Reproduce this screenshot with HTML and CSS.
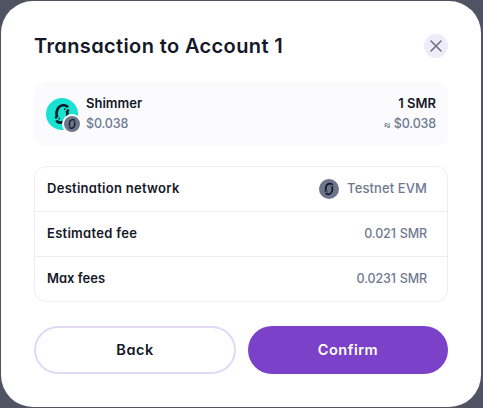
FILE: index.html
```html
<!DOCTYPE html>
<html lang="en">
<head>
<meta charset="utf-8">
<title>Transaction to Account 1</title>
<link rel="stylesheet" href="styles.css">
</head>
<body>
<svg class="defs" aria-hidden="true">
  <symbol id="shimmer" viewBox="0 0 32 32">
    <g fill="none" stroke="currentColor" stroke-width="2.7">
      <path d="M21.8 9.4C20.2 6.4 14.6 6.5 12.2 10C10.6 12.8 10 16.4 11.3 19.2"/>
      <path d="M10.4 22.4C11.8 25.4 17.4 25.3 19.8 21.8C21.4 19 22 15.4 20.7 12.6"/>
    </g>
    <circle cx="22" cy="12.4" r="1.2" fill="currentColor"/>
    <circle cx="10" cy="19.4" r="1.2" fill="currentColor"/>
    <circle cx="18.8" cy="11.2" r=".9" fill="currentColor"/>
    <circle cx="13.2" cy="20.6" r=".9" fill="currentColor"/>
  </symbol>
</svg>
<main class="modal">
  <header class="header">
    <h1 class="title">Transaction to Account 1</h1>
    <button class="close" aria-label="Close">
      <svg viewBox="0 0 24 24" width="24" height="24"><path d="M7 7L17 17M17 7L7 17"/></svg>
    </button>
  </header>
  <section class="asset">
    <div class="token">
      <svg class="token-icon"><use href="#shimmer"/></svg>
      <svg class="token-badge"><use href="#shimmer"/></svg>
    </div>
    <div class="asset-text">
      <div class="strong">Shimmer</div>
      <div class="muted price">$0.038</div>
    </div>
    <div class="asset-text amount">
      <div class="strong">1 SMR</div>
      <div class="muted price"><span class="approx">≈</span> $0.038</div>
    </div>
  </section>
  <section class="details">
    <div class="row"><span class="strong label">Destination network</span><span class="muted value"><svg class="network"><use href="#shimmer"/></svg><span class="evm">Testnet EVM</span></span></div>
    <div class="row"><span class="strong label">Estimated fee</span><span class="muted fee">0.021 SMR</span></div>
    <div class="row"><span class="strong">Max fees</span><span class="muted fee">0.0231 SMR</span></div>
  </section>
  <footer class="actions">
    <button class="button back">Back</button>
    <button class="button confirm">Confirm</button>
  </footer>
</main>
</body>
</html>
```
FILE: styles.css
```css
* { box-sizing: border-box; }
body {
  margin: 0;
  height: 408px;
  padding: 1px 2px 1px 1px;
  overflow: hidden;
  background: #505362;
  color: #141827;
  font-family: Inter, "Liberation Sans", sans-serif;
  font-feature-settings: "cv11", "ss03";
}
.defs { display: none; }
.modal {
  height: 406px;
  padding: 33px;
  border-radius: 32px;
  background: #fff;
}
.header { display: flex; align-items: center; justify-content: space-between; height: 24px; margin-bottom: 24px; }
.title { margin: 0; font-size: 20px; line-height: 24px; font-weight: 600; letter-spacing: 0.38px; white-space: nowrap; }
.close { width: 24px; height: 24px; padding: 0; border: 0; border-radius: 50%; background: #f0ebf8; }
.close svg { display: block; fill: none; stroke: #6b7186; stroke-width: 1.6; stroke-linecap: round; }
.asset {
  display: flex;
  align-items: center;
  height: 64px;
  margin-bottom: 20px;
  padding: 0 12px;
  border-radius: 12px;
  background: #fbfbfe;
}
.token { position: relative; width: 32px; height: 32px; margin-right: 8px; }
.token-icon { display: block; width: 32px; height: 32px; border-radius: 50%; background: #19e2d3; color: #061c28; }
.token-badge {
  position: absolute;
  left: 16px;
  top: 16px;
  width: 20px;
  height: 20px;
  border: 2px solid #fff;
  border-radius: 50%;
  background: #6d758b;
  color: #111827;
}
.asset-text { padding-bottom: 1px; font-size: 13px; line-height: 20px; white-space: nowrap; }
.asset-text .strong { line-height: 20px; }
.amount { margin-left: auto; text-align: right; }
.strong { font-weight: 600; }
.label { letter-spacing: 0.28px; }
.muted { color: #707991; font-weight: 500; }
.price { font-size: 12.5px; letter-spacing: -0.15px; line-height: 21px; }
.approx { font-size: 11px; }
.details { margin-bottom: 24px; height: 136px; border: 1px solid #efecf8; border-radius: 12px; }
.row {
  display: flex;
  align-items: center;
  justify-content: space-between;
  height: 45px;
  padding: 0 20px 2px 12px;
  border-bottom: 1px solid #efecf8;
  font-size: 13px;
}
.row:last-child { border-bottom: 0; height: 44px; }
.value { display: flex; align-items: center; gap: 8px; }
.evm { letter-spacing: 0.1px; }
.fee { font-size: 12.5px; letter-spacing: -0.15px; word-spacing: 1px; }
.network { position: relative; top: 1px; width: 20px; height: 20px; border-radius: 50%; background: #6d758b; color: #111827; }
.actions { display: grid; grid-template-columns: 202px 200px; gap: 12px; }
.button { height: 48px; padding: 0 0 2px; border: 0; border-radius: 24px; font: inherit; font-size: 14.5px; font-weight: 600; letter-spacing: 0.5px; }
.back { border: 2px solid #e3d9f5; background: #fff; color: #141827; }
.confirm { background: #7b41c9; color: #fff; }
```
